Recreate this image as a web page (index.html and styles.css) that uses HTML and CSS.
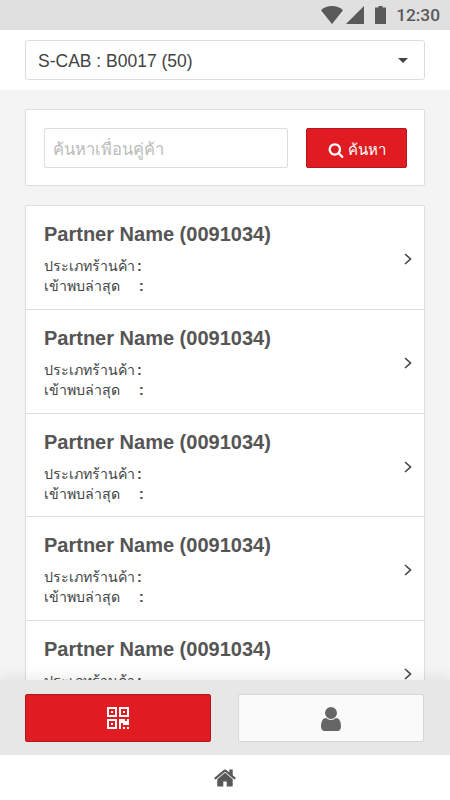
FILE: index.html
```html
<!DOCTYPE html>
<html lang="th">
<head>
    <meta charset="UTF-8">
    <meta name="viewport" content="width=device-width, initial-scale=1.0">
    <title>Partners</title>
    <link rel="stylesheet" href="styles.css">
</head>
<body>
    <header class="status-bar">
        <svg class="wifi" viewBox="0 0 22 18"><path d="M11 18L0 4.200Q4.800 0 11 0T22 4.200z"/></svg>
        <svg class="signal" viewBox="0 0 18 18"><path d="M18 0v18H0z"/></svg>
        <svg class="battery" viewBox="0 0 11 18"><path d="M3.500 0h4v1.500H11V18H0V1.500h3.500z"/></svg>
        <span class="time">12:30</span>
    </header>

    <div class="picker">
        <button class="select">
            <span>S-CAB : B0017 (50)</span>
            <span class="caret"></span>
        </button>
    </div>

    <main class="content">
        <form class="search">
            <input class="search-input" type="text" placeholder="ค้นหาเพื่อนคู่ค้า">
            <button class="search-button" type="button">
                <svg viewBox="0 0 1792 1792"><path d="M1216 832q0-185-131.500-316.500t-316.500-131.500-316.500 131.500-131.500 316.500 131.500 316.500 316.500 131.500 316.500-131.500 131.500-316.500zm512 832q0 52-38 90t-90 38q-54 0-90-38l-343-342q-179 124-399 124-143 0-273.500-55.500t-225-150-150-225-55.500-273.500 55.500-273.500 150-225 225-150 273.500-55.500 273.500 55.500 225 150 150 225 55.500 273.500q0 220-124 399l343 343q37 37 37 90z"/></svg>
                <span>ค้นหา</span>
            </button>
        </form>

        <ul class="partners">
            <li class="partner">
                <div>
                    <h2>Partner Name (0091034)</h2>
                    <p><span>ประเภทร้านค้า</span><b>:</b></p>
                    <p class="visited"><span>เข้าพบล่าสุด</span><b>:</b></p>
                </div>
                <svg class="chevron" viewBox="0 0 8 12"><path d="M1 1l5.500 5L1 11"/></svg>
            </li>
            <li class="partner">
                <div>
                    <h2>Partner Name (0091034)</h2>
                    <p><span>ประเภทร้านค้า</span><b>:</b></p>
                    <p class="visited"><span>เข้าพบล่าสุด</span><b>:</b></p>
                </div>
                <svg class="chevron" viewBox="0 0 8 12"><path d="M1 1l5.500 5L1 11"/></svg>
            </li>
            <li class="partner">
                <div>
                    <h2>Partner Name (0091034)</h2>
                    <p><span>ประเภทร้านค้า</span><b>:</b></p>
                    <p class="visited"><span>เข้าพบล่าสุด</span><b>:</b></p>
                </div>
                <svg class="chevron" viewBox="0 0 8 12"><path d="M1 1l5.500 5L1 11"/></svg>
            </li>
            <li class="partner">
                <div>
                    <h2>Partner Name (0091034)</h2>
                    <p><span>ประเภทร้านค้า</span><b>:</b></p>
                    <p class="visited"><span>เข้าพบล่าสุด</span><b>:</b></p>
                </div>
                <svg class="chevron" viewBox="0 0 8 12"><path d="M1 1l5.500 5L1 11"/></svg>
            </li>
            <li class="partner">
                <div>
                    <h2>Partner Name (0091034)</h2>
                    <p><span>ประเภทร้านค้า</span><b>:</b></p>
                </div>
                <svg class="chevron" viewBox="0 0 8 12"><path d="M1 1l5.500 5L1 11"/></svg>
            </li>
        </ul>
    </main>

    <nav class="tabs">
        <button class="tab active" aria-label="QR code">
            <svg class="qr" viewBox="0 0 11 11"><path fill-rule="evenodd" d="M0 0h5v5H0zM1 1v3h3V1zM2 2h1v1H2zM6 0h5v5H6zM7 1v3h3V1zM8 2h1v1H8zM0 6h5v5H0zM1 7v3h3V7zM2 8h1v1H2zM6 6h3v1h1V6h1v3H8V8H7v3H6zM8 10h1v1H8zM10 10h1v1h-1z"/></svg>
        </button>
        <button class="tab" aria-label="Profile">
            <svg class="user" viewBox="0 0 1792 1792"><path d="M1536 1399q0 109-62.500 187t-150.500 78h-854q-88 0-150.500-78t-62.500-187q0-85 8.500-160.500t31.500-152 58.500-131 94-89 134.500-34.500q131 128 313 128t313-128q76 0 134.500 34.500t94 89 58.500 131 31.500 152 8.500 160.500zm-256-887q0 159-112.500 271.500t-271.500 112.500-271.500-112.500-112.500-271.500 112.500-271.500 271.500-112.500 271.500 112.500 112.500 271.500z"/></svg>
        </button>
    </nav>

    <footer class="home-bar">
        <svg viewBox="0 0 1792 1792"><path d="M1472 992v480q0 26-19 45t-45 19h-384v-384h-256v384h-384q-26 0-45-19t-19-45v-480q0-1 .5-3t.5-3l575-474 575 474q1 2 1 6zm223-69l-62 74q-8 9-21 11h-3q-13 0-21-7l-692-577-692 577q-12 8-24 7-13-2-21-11l-62-74q-8-10-7-23.500t11-21.500l719-599q32-26 76-26t76 26l244 204v-195q0-14 9-23t23-9h192q14 0 23 9t9 23v408l219 182q10 8 11 21.500t-7 23.500z"/></svg>
    </footer>
</body>
</html>
```

FILE: styles.css
```css
* {
    box-sizing: border-box;
}

body {
    font-family: "Liberation Sans", Arial, sans-serif;
    background-color: #f4f4f4;
    color: #444;
    display: flex;
    flex-direction: column;
    height: 100vh;
    margin: 0;
    overflow: hidden;
}

button, input {
    font-family: inherit;
    margin: 0;
}

svg {
    display: block;
    fill: currentColor;
    flex: none;
}

.status-bar {
    height: 30px;
    flex: none;
    background-color: #e0e0e0;
    color: #595959;
    display: flex;
    align-items: center;
    justify-content: flex-end;
    padding-right: 10px;
}

.wifi {
    width: 22px;
    height: 18px;
    margin-right: 3px;
}

.signal {
    width: 18px;
    height: 18px;
    margin-right: 11px;
}

.battery {
    width: 11px;
    height: 18px;
    margin-right: 10px;
}

.time {
    font-family: Roboto, sans-serif;
    font-size: 17.3px;
    font-weight: 500;
}

.picker {
    height: 60px;
    flex: none;
    background-color: #fff;
    padding: 10px 25px;
}

.select {
    width: 100%;
    height: 40px;
    display: flex;
    align-items: center;
    justify-content: space-between;
    padding: 3px 16px 0 12px;
    background-color: #fff;
    border: 1px solid #ddd;
    border-radius: 3px;
    color: #444;
    font-size: 17.5px;
}

.caret {
    border: 5px solid transparent;
    border-top-color: #444;
    border-bottom: 0;
    margin-bottom: 3px;
}

.content {
    flex: 1;
    min-height: 0;
    overflow: hidden;
    padding: 19px 25px 0;
}

.search {
    height: 77px;
    display: flex;
    justify-content: space-between;
    padding: 18px 17px 17px 18px;
    margin-bottom: 19px;
    background-color: #fff;
    border: 1px solid #ddd;
    border-radius: 2px;
}

.search-input {
    width: 244px;
    height: 40px;
    padding: 2px 8px 0;
    border: 1px solid #ddd;
    border-radius: 2px;
    font-size: 16.5px;
}

.search-input::placeholder {
    color: #bbb;
}

.search-button {
    width: 101px;
    height: 40px;
    display: flex;
    align-items: center;
    justify-content: center;
    gap: 4px;
    padding: 3px 0 0;
    background-color: #e01b22;
    border: 1px solid #b3161b;
    border-radius: 2px;
    color: #fff;
    font-size: 15px;
}

.search-button svg {
    width: 16px;
    height: 16px;
}

.partners {
    list-style: none;
    margin: 0;
    padding: 0;
    background-color: #fff;
    border: 1px solid #ddd;
    border-radius: 2px;
}

.partner {
    height: 103.75px;
    display: flex;
    justify-content: space-between;
    padding: 16px 12px 0 18px;
    border-bottom: 1px solid #ddd;
}

.partner h2 {
    height: 34px;
    margin: 0;
    color: #555;
    font-size: 20px;
    line-height: 24px;
}

.partner p {
    display: flex;
    height: 20px;
    margin: 0;
    font-size: 14.2px;
    line-height: 20px;
    white-space: nowrap;
}

.partner p span {
    width: 93px;
}

.partner .visited span {
    width: 95px;
}

.chevron {
    width: 8px;
    height: 12px;
    margin-top: 31px;
    fill: none;
    stroke: #444;
    stroke-width: 1.6;
}

/* the shadow fades the end of the list */
.tabs {
    position: relative;
    height: 75px;
    flex: none;
    display: flex;
    justify-content: space-between;
    padding: 14px 26px 0 25px;
    background-color: #e7e7e7;
    box-shadow: 0 -3px 14px rgba(0, 0, 0, 0.08);
}

.tab {
    width: 186px;
    height: 48px;
    display: flex;
    align-items: center;
    justify-content: center;
    padding: 0;
    background-color: #fafafa;
    border: 1px solid #d5d5d5;
    border-radius: 2px;
    color: #666;
}

.tab.active {
    background-color: #e01b22;
    border-color: #b3161b;
    color: #fff;
}

.qr {
    width: 22px;
    height: 22px;
}

.user {
    width: 28px;
    height: 28px;
    margin-top: 2px;
}

.home-bar {
    position: relative;
    height: 45px;
    flex: none;
    display: flex;
    align-items: center;
    justify-content: center;
    background-color: #fff;
    color: #595959;
}

.home-bar svg {
    width: 24px;
    height: 24px;
}
```
